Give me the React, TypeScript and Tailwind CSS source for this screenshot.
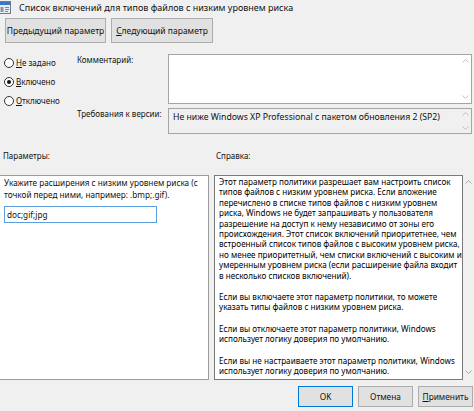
import React from 'react';

function Chevron({ up, color = '#c2c2c2' }: { up?: boolean; color?: string }) {
  return (
    <svg width="7" height="4" viewBox="0 0 7 4" className="block">
      <path d={up ? 'M0.5 3.5 L3.5 0.5 L6.5 3.5' : 'M0.5 0.5 L3.5 3.5 L6.5 0.5'} fill="none" stroke={color} strokeWidth="1" />
    </svg>
  );
}

function ScrollStrip({ color, pad = 'py-[5px]' }: { color?: string; pad?: string }) {
  return (
    <div className={`w-[11px] shrink-0 flex flex-col justify-between items-center ${pad}`}>
      <Chevron up color={color} />
      <Chevron color={color} />
    </div>
  );
}

function Radio({ checked, children }: { checked?: boolean; children: React.ReactNode }) {
  return (
    <div className="flex items-center gap-[2px] h-[19px]">
      <span className="w-[10px] h-[10px] rounded-full border border-[#333] bg-white flex items-center justify-center">
        {checked && <span className="w-[4px] h-[4px] rounded-full bg-[#111]" />}
      </span>
      <span>{children}</span>
    </div>
  );
}

function AppIcon() {
  return (
    <svg width="13" height="13" viewBox="0 0 13 13" className="block -ml-[2px]">
      <rect x="0.5" y="0.5" width="12" height="12" fill="#e9eef4" stroke="#6d7a8a" />
      <rect x="1" y="1" width="11" height="3" fill="#3b78c4" />
      <rect x="2.5" y="6" width="3" height="5" fill="#8a96a6" />
      <rect x="7" y="6" width="4" height="1" fill="#7d8794" />
      <rect x="7" y="8" width="4" height="1" fill="#7d8794" />
      <rect x="7" y="10" width="3" height="1" fill="#7d8794" />
    </svg>
  );
}

const helpParas: string[][] = [
  [
    'Этот параметр политики разрешает вам настроить список',
    'типов файлов с низким уровнем риска. Если вложение',
    'перечислено в списке типов файлов с низким уровнем',
    'риска, Windows не будет запрашивать у пользователя',
    'разрешение на доступ к нему независимо от зоны его',
    'происхождения. Этот список включений приоритетнее, чем',
    'встроенный список типов файлов с высоким уровнем риска,',
    'но менее приоритетный, чем списки включений с высоким и',
    'умеренным уровнем риска (если расширение файла входит',
    'в несколько списков включений).',
  ],
  ['Если вы включаете этот параметр политики, то можете', 'указать типы файлов с низким уровнем риска.'],
  ['Если вы отключаете этот параметр политики, Windows', 'использует логику доверия по умолчанию.'],
  ['Если вы не настраиваете этот параметр политики, Windows', 'использует логику доверия по умолчанию.'],
];

export default function App() {
  return (
    <div className="w-[474px] h-[411px] overflow-hidden bg-[#f0f0f0] text-[#111] text-[8.3px] leading-[12px] font-['Noto_Sans','Open_Sans',sans-serif]">
      {/* title */}
      <div className="flex items-center h-[15px] gap-[8px]">
        <AppIcon />
        <span className="whitespace-nowrap text-[9px]">Список включений для типов файлов с низким уровнем риска</span>
      </div>

      {/* prev / next */}
      <div className="flex gap-[5px] pl-[5px] mt-[3px] text-[8.5px]">
        <button className="h-[25px] w-[101px] border border-[#adadad] bg-[#e1e1e1] whitespace-nowrap">
          Пре<span className="underline">д</span>ыдущий параметр
        </button>
        <button className="h-[25px] w-[102px] border border-[#adadad] bg-[#e1e1e1] whitespace-nowrap">
          <span className="underline">С</span>ледующий параметр
        </button>
      </div>

      {/* state + comment + requirements */}
      <div className="flex mt-[10px]">
        <div className="w-[77px] pl-[4px] flex flex-col text-[8px]">
          <Radio>
            <span className="underline">Н</span>е задано
          </Radio>
          <Radio checked>
            <span className="underline">В</span>ключено
          </Radio>
          <Radio>
            <span className="underline">О</span>тключено
          </Radio>
        </div>
        <div className="w-[91px] flex flex-col pt-[1px] text-[8px]">
          <span className="h-[54px]">Комментарий:</span>
          <span className="whitespace-nowrap">Требования к версии:</span>
        </div>
        <div className="w-[304px] flex flex-col gap-[4px] pt-[1px]">
          <div className="h-[50px] flex border border-[#a5a5a5] bg-white">
            <div className="flex-1" />
            <ScrollStrip pad="py-[4px]" />
          </div>
          <div className="h-[26px] flex border border-[#a5a5a5] bg-[#f0f0f0]">
            <div className="flex-1 pl-[4px] pt-[2px] whitespace-nowrap text-[8.7px]">
              Не ниже Windows XP Professional с пакетом обновления 2 (SP2)
            </div>
            <ScrollStrip pad="py-[3px]" />
          </div>
        </div>
      </div>

      {/* section captions */}
      <div className="flex mt-[16px] text-[8px]">
        <span className="w-[216px] pl-[3px]">Параметры:</span>
        <span>Справка:</span>
      </div>

      {/* panels */}
      <div className="flex mt-[13px]">
        <div className="w-[210px] h-[205px] bg-white border-y border-r border-[#9c9c9c] pl-[4px] pt-[1px] text-[8.2px]">
          <p className="whitespace-nowrap">Укажите расширения с низким уровнем риска (с</p>
          <p className="whitespace-nowrap">точкой перед ними, например: .bmp;.gif).</p>
          <div className="mt-[5px] w-[153px] h-[17px] border border-[#5a9fdc] bg-white pl-[2px] flex items-center">
            doc;gif;jpg
          </div>
        </div>
        <div className="ml-[5px] flex h-[205px]">
          <div className="w-[249px] border border-[#7a7a7a] bg-white pl-[4px] pt-[1px] text-[8.15px] text-black leading-[10.4px] overflow-hidden">
            {helpParas.map((para, i) => (
              <div key={i} className={i > 0 ? 'mt-[11px]' : ''}>
                {para.map((line, j) => (
                  <div key={j} className="whitespace-nowrap">
                    {line}
                  </div>
                ))}
              </div>
            ))}
          </div>
          <ScrollStrip color="#a8a8a8" pad="pt-[5px] pb-[6px]" />
        </div>
      </div>

      {/* dialog buttons */}
      <div className="flex justify-end gap-[5px] pr-[1px] mt-[6px]">
        <button className="h-[21px] w-[55px] border border-[#0078d7] bg-[#e1e1e1]">OK</button>
        <button className="h-[21px] w-[55px] border border-[#adadad] bg-[#e1e1e1]">Отмена</button>
        <button className="h-[21px] w-[55px] border border-[#adadad] bg-[#e1e1e1]">
          <span className="underline">П</span>рименить
        </button>
      </div>
    </div>
  );
}
